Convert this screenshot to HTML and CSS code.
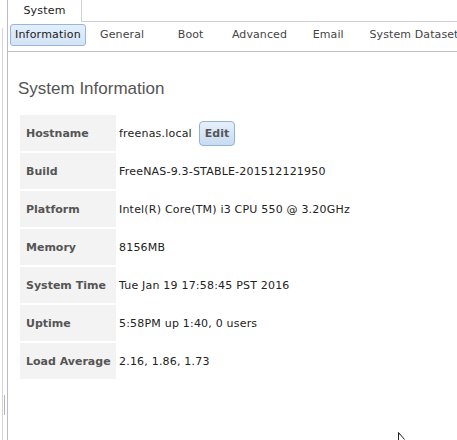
FILE: index.html
```html
<!DOCTYPE html>
<html>
<head>
<meta charset="utf-8">
<link rel="stylesheet" href="styles.css">
</head>
<body>
<div class="app">
  <div class="gutter"><div class="split"><div class="grip"></div></div></div>
  <div class="main">
    <div class="tabbar">
      <div class="tab">System</div>
      <div class="tab-fill"></div>
    </div>
    <nav class="subnav">
      <div class="item active"><span>Information</span></div>
      <div class="item"><span>General</span></div>
      <div class="item"><span>Boot</span></div>
      <div class="item"><span>Advanced</span></div>
      <div class="item"><span>Email</span></div>
      <div class="item"><span>System Dataset</span></div>
    </nav>
    <section class="content">
      <h2 class="title">System Information</h2>
      <table class="info">
        <tr><th>Hostname</th><td>freenas.local<button class="edit">Edit</button></td></tr>
        <tr><th>Build</th><td>FreeNAS-9.3-STABLE-201512121950</td></tr>
        <tr><th>Platform</th><td>Intel(R) Core(TM) i3 CPU 550 @ 3.20GHz</td></tr>
        <tr><th>Memory</th><td>8156MB</td></tr>
        <tr><th>System Time</th><td>Tue Jan 19 17:58:45 PST 2016</td></tr>
        <tr><th>Uptime</th><td>5:58PM up 1:40, 0 users</td></tr>
        <tr><th>Load Average</th><td>2.16, 1.86, 1.73</td></tr>
      </table>
    </section>
  </div>
</div>
<svg class="cursor" width="8" height="10" viewBox="0 0 8 10"><path d="M0.5 0.5 L0.5 8.5 M0.5 0.5 L6.5 7.5 M1 1.5 L2 2.5" stroke="#222" stroke-width="1" fill="none"/></svg>
</body>
</html>
```

FILE: styles.css
```css
html, body {
  margin: 0;
  padding: 0;
  background: #fff;
  overflow: hidden;
}
body {
  font-family: "DejaVu Sans", Verdana, sans-serif;
  font-size: 11px;
  color: #222;
  width: 457px;
  height: 440px;
  position: relative;
}
.app {
  display: flex;
  height: 440px;
}
.gutter {
  width: 7px;
  border-right: 1px solid #bcbcc8;
  display: flex;
}
.split {
  margin: 28px 0 0 2px;
  border-left: 1px solid #d2d2da;
  flex: 1;
}
.grip {
  margin: 367px 0 0 1px;
  width: 1px;
  height: 20px;
  background: #b4b4c4;
}
.main {
  flex: 1;
  min-width: 0;
  display: flex;
  flex-direction: column;
}
.tabbar {
  display: flex;
  height: 22px;
}
.tab {
  width: 73px;
  border-right: 1px solid #cfcfd6;
  text-align: center;
  line-height: 21px;
  letter-spacing: 0.2px;
  color: #222;
}
.tab-fill {
  flex: 1;
  border-bottom: 1px solid #cfcfd6;
}
.subnav {
  display: flex;
  padding-bottom: 3px;
  border-bottom: 1px solid #bdbdc6;
  white-space: nowrap;
  overflow: hidden;
}
.item {
  box-sizing: border-box;
  min-width: 68.5px;
  padding: 2px;
  text-align: center;
  flex: none;
}
.item span {
  display: inline-block;
  padding: 0 4px;
  border: 1px solid transparent;
  line-height: 20px;
  letter-spacing: 0.1px;
  color: #444;
}
.item.active span {
  background: linear-gradient(#e3eefa, #d3e4f6);
  border-color: #98b6da;
  border-radius: 3px;
  color: #1a1a1a;
  letter-spacing: 0.2px;
}
.content {
  padding: 0 0 0 10px;
}
.title {
  margin: 27px 0 14px;
  font-family: "Liberation Sans", Arial, sans-serif;
  font-size: 17px;
  font-weight: normal;
  line-height: 20px;
  color: #555;
}
.info {
  border-collapse: separate;
  border-spacing: 2px;
}
.info th {
  width: 90px;
  height: 36px;
  padding: 0 0 0 6px;
  background: #f3f3f3;
  text-align: left;
  vertical-align: middle;
  font-weight: bold;
  color: #555;
  white-space: nowrap;
}
.info td {
  height: 36px;
  padding: 0 0 0 1px;
  vertical-align: middle;
  letter-spacing: 0.2px;
  color: #222;
  white-space: nowrap;
}
.edit {
  margin-left: 7px;
  height: 25px;
  padding: 0 5px;
  border: 1px solid #95b1d4;
  border-radius: 4px;
  background: linear-gradient(#e6f0fb, #c8dbf1);
  font-family: "DejaVu Sans", Verdana, sans-serif;
  font-size: 11px;
  font-weight: bold;
  color: #555;
  vertical-align: middle;
}
.cursor {
  position: absolute;
  left: 398px;
  top: 432px;
}
```
